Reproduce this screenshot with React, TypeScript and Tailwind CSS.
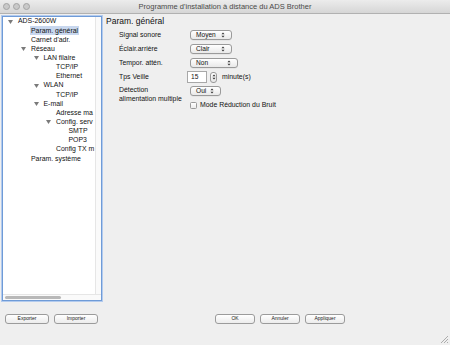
import React from 'react';

type Node = { label: string; depth: number; open?: boolean; selected?: boolean };

const tree: Node[] = [
  { label: 'ADS-2600W', depth: 0, open: true },
  { label: 'Param. général', depth: 1, selected: true },
  { label: "Carnet d'adr.", depth: 1 },
  { label: 'Réseau', depth: 1, open: true },
  { label: 'LAN filaire', depth: 2, open: true },
  { label: 'TCP/IP', depth: 3 },
  { label: 'Ethernet', depth: 3 },
  { label: 'WLAN', depth: 2, open: true },
  { label: 'TCP/IP', depth: 3 },
  { label: 'E-mail', depth: 2, open: true },
  { label: 'Adresse ma', depth: 3 },
  { label: 'Config. serv', depth: 3, open: true },
  { label: 'SMTP', depth: 4 },
  { label: 'POP3', depth: 4 },
  { label: 'Config TX m', depth: 3 },
  { label: 'Param. système', depth: 1 },
];

// petit triangle d'ouverture
function Disclosure() {
  return (
    <svg width="5" height="4" viewBox="0 0 5 4" className="shrink-0">
      <path d="M0 0 L5 0 L2.5 4 Z" fill="#7a7a7a" />
    </svg>
  );
}

function UpDown() {
  return (
    <svg width="4" height="6" viewBox="0 0 4 6" className="shrink-0">
      <path d="M0.5 2.3 L2 0.5 L3.5 2.3 Z" fill="#333" />
      <path d="M0.5 3.7 L2 5.5 L3.5 3.7 Z" fill="#333" />
    </svg>
  );
}

function Popup({ value, width }: { value: string; width: string }) {
  return (
    <div
      className={`${width} h-[10px] flex items-center justify-between pl-[5px] pr-[6px] rounded-[3px] border border-[#9a9a9a] bg-gradient-to-b from-white to-[#e9e9e9] shadow-[0_0.5px_0_rgba(0,0,0,0.08)] text-[6.6px] text-[#111]`}
    >
      <span>{value}</span>
      <UpDown />
    </div>
  );
}

function MacButton({ label, width }: { label: string; width: string }) {
  return (
    <div
      className={`${width} h-[10px] flex items-center justify-center rounded-[3px] border border-[#9b9b9b] bg-gradient-to-b from-white to-[#ececec] text-[5px] text-[#222]`}
    >
      {label}
    </div>
  );
}

export default function App() {
  return (
    <div
      className="w-[450px] h-[345px] flex flex-col bg-[#efefef] overflow-hidden text-[#111]"
      style={{ fontFamily: '"Liberation Sans", Arial, sans-serif' }}
    >
      {/* barre de titre */}
      <div className="h-[14px] shrink-0 relative flex items-center bg-gradient-to-b from-[#ececec] to-[#d6d6d6] border-b border-[#b1b1b1]">
        <div className="flex items-center gap-[3px] pl-[3px]">
          <span className="w-[7px] h-[7px] rounded-full bg-[#c9c9c9] border border-[#a3a3a3]" />
          <span className="w-[7px] h-[7px] rounded-full bg-[#c9c9c9] border border-[#a3a3a3]" />
          <span className="w-[7px] h-[7px] rounded-full bg-[#c9c9c9] border border-[#a3a3a3]" />
        </div>
        <div className="absolute inset-0 flex items-center justify-center text-[7.5px] text-[#4a4a4a]">
          Programme d'installation à distance du ADS Brother
        </div>
      </div>

      {/* contenu */}
      <div className="flex flex-1 min-h-0">
        {/* arborescence */}
        <div className="w-[104px] shrink-0 pl-[2px] pt-[2px]">
          <div className="w-[100px] h-[285px] flex flex-col border border-[#6f9bd7] shadow-[0_0_0_1px_#b3cbee] bg-white">
            <div className="flex flex-1 min-h-0">
              <div className="flex-1 text-[6.9px] overflow-hidden">
                {tree.map((n, i) => (
                  <div key={i} className="h-[9.15px] flex items-center whitespace-nowrap">
                    <div
                      className="flex items-center"
                      style={{ paddingLeft: `${n.depth === 0 ? 4 : 17 + (n.depth - 1) * 12.5}px` }}
                    >
                      <div className="w-[11px] flex items-center justify-start pl-[1px]">
                        {n.open && <Disclosure />}
                      </div>
                      <span
                        className={
                          n.selected
                            ? 'bg-[#c8d7ee] px-[1px] mx-[-1px] h-[8.5px] flex items-center'
                            : ''
                        }
                      >
                        {n.label}
                      </span>
                    </div>
                  </div>
                ))}
              </div>
              <div className="w-[6px] shrink-0 bg-[#fafafa] border-l border-[#e6e6e6]" />
            </div>
            <div className="h-[6px] shrink-0 bg-[#fafafa] border-t border-[#e6e6e6] flex items-center pl-[2px]">
              <div className="w-[56px] h-[3px] rounded-full bg-[#b8b8b8]" />
            </div>
          </div>
        </div>

        {/* panneau de paramètres */}
        <div className="flex-1 pl-[2px] pt-[1px]">
          <div className="text-[8.5px] h-[12px] flex items-center">Param. général</div>
          <div className="pl-[13px] pt-[1px] text-[6.9px]">
            <div className="h-[14px] flex items-center">
              <div className="w-[71px]">Signal sonore</div>
              <Popup value="Moyen" width="w-[42px]" />
            </div>
            <div className="h-[14px] flex items-center">
              <div className="w-[71px]">Éclair.arrière</div>
              <Popup value="Clair" width="w-[42px]" />
            </div>
            <div className="h-[14px] flex items-center">
              <div className="w-[71px]">Tempor. attén.</div>
              <Popup value="Non" width="w-[48px]" />
            </div>
            <div className="h-[14px] flex items-center">
              <div className="w-[68px]">Tps Veille</div>
              <div className="w-[20px] h-[12px] flex items-center pl-[3px] bg-white border border-[#a8a8a8] text-[6.6px]">
                15
              </div>
              <div className="ml-[3px] w-[7px] h-[11px] rounded-[3px] border border-[#9a9a9a] bg-gradient-to-b from-white to-[#e6e6e6] flex items-center justify-center">
                <UpDown />
              </div>
              <div className="ml-[5px]">minute(s)</div>
            </div>
            <div className="flex pt-[1px]">
              <div className="w-[71px] leading-[9px]">
                <div>Détection</div>
                <div>alimentation multiple</div>
              </div>
              <div className="pt-[1px]">
                <Popup value="Oui" width="w-[31px]" />
                <div className="flex items-center gap-[3px] mt-[4px]">
                  <div className="w-[7px] h-[7px] rounded-[1.5px] border border-[#9a9a9a] bg-gradient-to-b from-white to-[#ececec]" />
                  <span>Mode Réduction du Bruit</span>
                </div>
              </div>
            </div>
          </div>
        </div>
      </div>

      {/* boutons */}
      <div className="h-[43px] shrink-0 relative flex pt-[12px]">
        <div className="w-[215px] flex gap-[5px] pl-[5px]">
          <MacButton label="Exporter" width="w-[44px]" />
          <MacButton label="Importer" width="w-[44px]" />
        </div>
        <div className="flex gap-[5px]">
          <MacButton label="OK" width="w-[40px]" />
          <MacButton label="Annuler" width="w-[40px]" />
          <MacButton label="Appliquer" width="w-[40px]" />
        </div>
        <svg width="8" height="8" viewBox="0 0 8 8" className="absolute right-[2px] bottom-[2px]">
          <path d="M1 8 L8 1 M4 8 L8 4 M7 8 L8 7" stroke="#9a9a9a" strokeWidth="0.8" />
        </svg>
      </div>
    </div>
  );
}
